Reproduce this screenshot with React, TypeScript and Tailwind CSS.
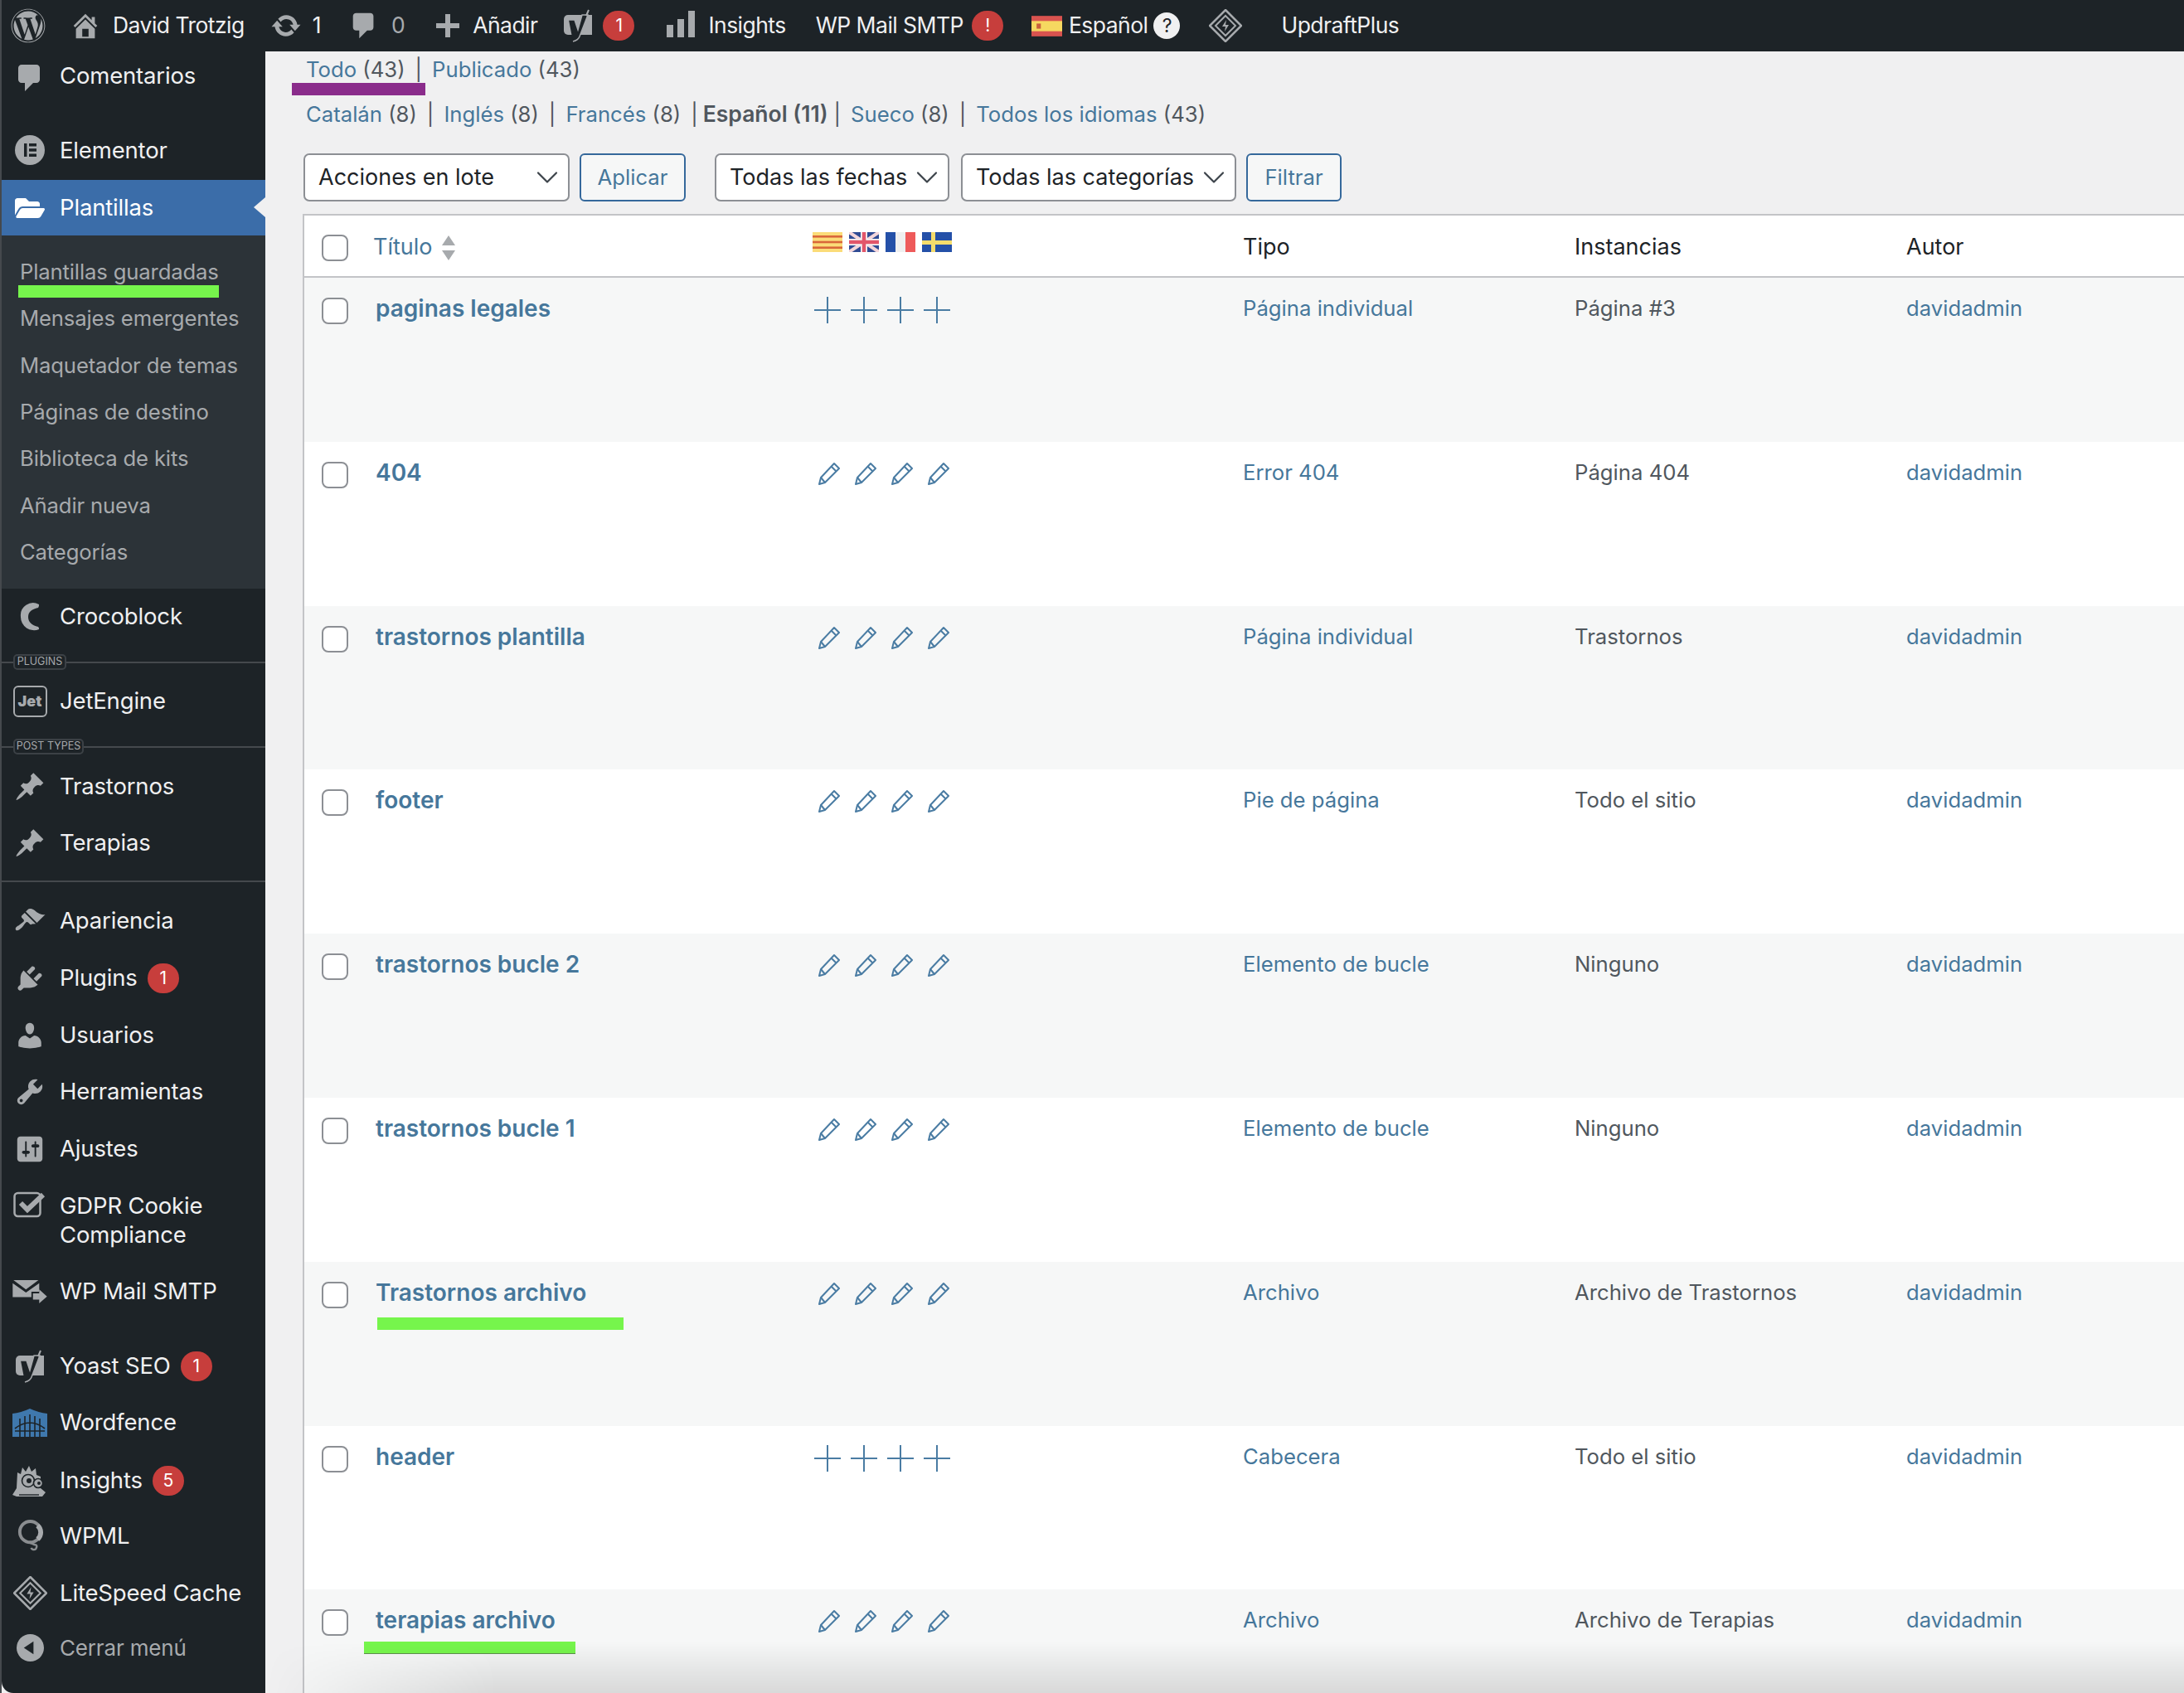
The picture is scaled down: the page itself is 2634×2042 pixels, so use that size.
import React from 'react';
import { ChevronDown } from 'lucide-react';
import { FaWordpress, FaFolderOpen } from 'react-icons/fa';

const LINK = 'text-[#46779b]';

// dashicons paths, 20x20 viewbox
const d = {
  home: 'M16 8.5l1.53 1.53-1.06 1.06L10 4.62l-6.47 6.47-1.06-1.06L10 2.5l4 4v-2h2v4zm-6-2.46l6 5.99V18H4v-5.97zM12 17v-5H8v5h4z',
  update: 'M10.2 3.28c3.53 0 6.43 2.61 6.92 6h2.08l-3.5 4-3.5-4h2.32c-.45-1.97-2.21-3.45-4.32-3.45-1.45 0-2.73.71-3.54 1.78L4.95 5.66C6.23 4.2 8.11 3.28 10.2 3.28zm-.4 13.44c-3.52 0-6.43-2.61-6.92-6H.8l3.5-4c1.17 1.33 2.33 2.67 3.5 4H5.48c.45 1.97 2.21 3.45 4.32 3.45 1.45 0 2.73-.71 3.54-1.78l1.71 1.95c-1.28 1.46-3.15 2.38-5.25 2.38z',
  comment: 'M5 2h9c1.1 0 2 .9 2 2v7c0 1.1-.9 2-2 2h-2l-5 5v-5H5c-1.1 0-2-.9-2-2V4c0-1.1.9-2 2-2z',
  pin: 'M10.44 3.02l1.82-1.82 6.36 6.35-1.83 1.82c-1.05-.68-2.48-.57-3.41.36l-.75.75c-.92.93-1.04 2.35-.35 3.41l-1.83 1.82-2.41-2.41-2.8 2.79c-.42.42-3.38 2.71-3.8 2.29s1.86-3.39 2.28-3.81l2.79-2.79L4.1 9.36l1.83-1.82c1.05.69 2.48.57 3.4-.36l.75-.75c.93-.92 1.05-2.35.36-3.41z',
  brush: 'M14.48 11.06L7.41 3.99l1.5-1.5c.5-.56 2.3-.47 3.51.32 1.21.8 1.43 1.28 2.91 2.1 1.18.64 2.45 1.26 4.45.85zm-.71.71L6.7 4.7 4.93 6.47c-.39.39-.39 1.02 0 1.41l1.06 1.06c.39.39.39 1.03 0 1.42-.6.6-1.43 1.11-2.21 1.69-.35.26-.7.53-1.01.84C1.43 13.23.4 14.84 1.19 15.63c.79.79 2.4-.24 3.76-1.59.31-.31.58-.66.85-1.01.57-.78 1.08-1.61 1.69-2.21.39-.39 1.02-.39 1.41 0l1.06 1.06c.39.39 1.02.39 1.41 0z',
  plug: 'M13.11 4.36L9.87 7.6 8 5.73l3.24-3.24c.35-.34 1.05-.2 1.56.32.52.51.66 1.21.31 1.55zm-8 1.77l.91-1.12 9.01 9.01-1.19.84c-.71.71-2.63 1.16-3.82 1.16H6.14L4.9 17.26c-.59.59-1.54.59-2.12 0-.59-.58-.59-1.53 0-2.12l1.24-1.24v-3.88c0-1.13.4-3.19 1.09-3.89zm7.26 3.97l3.24-3.24c.34-.35 1.04-.21 1.55.31.52.51.66 1.21.31 1.55l-3.24 3.25z',
  user: 'M10 9.25c-2.27 0-2.73-3.44-2.73-3.44C7 4.02 7.82 2 9.97 2c2.16 0 2.98 2.02 2.71 3.81 0 0-.41 3.44-2.68 3.44zm0 2.57L12.72 10c2.39 0 4.52 2.33 4.52 4.53v2.49s-3.65 1.13-7.24 1.13c-3.65 0-7.24-1.13-7.24-1.13v-2.49c0-2.25 1.94-4.48 4.47-4.48z',
  tools: 'M16.68 9.77c-1.34 1.34-3.3 1.67-4.95.99l-5.41 6.52c-.99.99-2.59.99-3.58 0s-.99-2.59 0-3.57l6.52-5.42c-.68-1.65-.35-3.61.99-4.95 1.28-1.28 3.12-1.62 4.72-1.06l-2.89 2.89 2.82 2.82 2.86-2.87c.53 1.58.18 3.39-1.08 4.65zM3.81 16.21c.4.39 1.04.39 1.43 0 .4-.4.4-1.04 0-1.43-.39-.4-1.03-.4-1.43 0-.39.39-.39 1.03 0 1.43z',
  settings: 'M18 16V4c0-1.1-.9-2-2-2H4c-1.1 0-2 .9-2 2v12c0 1.1.9 2 2 2h12c1.1 0 2-.9 2-2zM8 11h1c.55 0 1 .45 1 1s-.45 1-1 1H8v1.5c0 .28-.22.5-.5.5s-.5-.22-.5-.5V13H6c-.55 0-1-.45-1-1s.45-1 1-1h1V5.5c0-.28.22-.5.5-.5s.5.22.5.5V11zm5-2h-1c-.55 0-1-.45-1-1s.45-1 1-1h1V5.5c0-.28.22-.5.5-.5s.5.22.5.5V7h1c.55 0 1 .45 1 1s-.45 1-1 1h-1v5.5c0 .28-.22.5-.5.5s-.5-.22-.5-.5V9z',
};

function Dash({ path, className }: { path: string; className: string }) {
  return (
    <svg viewBox="0 0 20 20" className={className} fill="currentColor" fillRule="evenodd">
      <path d={path} />
    </svg>
  );
}

function YoastIcon({ className }: { className: string }) {
  return (
    <svg viewBox="0 0 36 40" className={className}>
      <path d="M6 7h29v24H6a5 5 0 0 1-5-5V12a5 5 0 0 1 5-5z" fill="#a7aaad" />
      <path d="M7 13h7l4 12 5-18h7L20 33c-1 3-4 5-8 6" fill="#1d2327" stroke="#a7aaad" strokeWidth="1.5" />
      <path d="M31 1l-3 7" stroke="#a7aaad" strokeWidth="2" />
    </svg>
  );
}

function LiteSpeedIcon({ className }: { className: string }) {
  return (
    <svg viewBox="0 0 40 40" className={className} fill="none" stroke="#a7aaad">
      <path d="M20 1l19 19-19 19L1 20z" strokeWidth="2.5" />
      <path d="M20 8l12 12-12 12L8 20z" strokeWidth="2" />
      <path d="M21 13l-5 8h4l-1 6 5-8h-4z" fill="#a7aaad" stroke="none" />
    </svg>
  );
}

function ElementorIcon() {
  return (
    <svg viewBox="0 0 36 36" className="w-[36px] h-[36px]">
      <circle cx="18" cy="18" r="18" fill="#a7aaad" />
      <rect x="11" y="10" width="3.5" height="16" fill="#1d2327" />
      <rect x="17" y="10" width="9" height="3.5" fill="#1d2327" />
      <rect x="17" y="16.2" width="9" height="3.5" fill="#1d2327" />
      <rect x="17" y="22.5" width="9" height="3.5" fill="#1d2327" />
    </svg>
  );
}

function CrocoIcon() {
  return (
    <svg viewBox="0 0 24 36" className="w-[24px] h-[36px]">
      <path d="M23 3A15 15 0 0 0 1 18 16 16 0 0 0 23 33c0-1 0-2-1-3-8-2-12-6-12-12S14 9 22 7c1-1 1-3 1-4z" fill="#a7aaad" />
    </svg>
  );
}

function JetIcon() {
  return (
    <div className="w-[41px] h-[38px] rounded-[6px] border-2 border-[#a7aaad] flex items-center justify-center text-[#a7aaad] text-[18px] font-black leading-none tracking-normal">
      Jet
    </div>
  );
}

function MailIcon() {
  return (
    <svg viewBox="0 0 44 34" className="w-[42px] h-[32px]" fill="#a7aaad">
      <path d="M1 2h32l-16 12z" />
      <path d="M0 6l17 12L34 6v11H24v7H0z" />
      <path d="M26 19h8v-5l10 9-10 9v-5h-8z" />
    </svg>
  );
}

function CheckBoxIcon() {
  return (
    <svg viewBox="0 0 40 32" className="w-[40px] h-[32px]" fill="none">
      <rect x="1.5" y="2" width="31" height="28" rx="4" stroke="#a7aaad" strokeWidth="2.5" />
      <path d="M9 14l8 8L36 4" stroke="#a7aaad" strokeWidth="6" />
    </svg>
  );
}

function WordfenceIcon() {
  return (
    <svg viewBox="0 0 42 34" className="w-[42px] h-[34px]">
      <path d="M0 6q10-1 21-6 11 5 21 6v28H0z" fill="#3f78ad" />
      <path d="M3 24q18-14 36 0M9 12v22M15 9v25M21 7v27M27 9v25M33 12v22M3 27h36" stroke="#1d2327" strokeWidth="1.6" fill="none" />
    </svg>
  );
}

function InsightsIcon() {
  return (
    <svg viewBox="0 0 42 40" className="w-[42px] h-[40px]">
      <path d="M6 10l4 2 2-8 4 5 4-7 3 7 5-4 1 8 5 2v14l6 5-4 5H5l-5-2 5-8z" fill="#a7aaad" />
      <circle cx="19" cy="20" r="7.5" fill="#a7aaad" stroke="#1d2327" strokeWidth="1.6" />
      <circle cx="20" cy="20" r="3" fill="#1d2327" />
      <circle cx="31" cy="23" r="5.5" fill="#a7aaad" stroke="#1d2327" strokeWidth="1.6" />
      <circle cx="32" cy="23" r="2" fill="#1d2327" />
      <path d="M8 37h24" stroke="#1d2327" strokeWidth="1.4" />
    </svg>
  );
}

function WpmlIcon() {
  return (
    <svg viewBox="0 0 34 40" className="w-[33px] h-[39px]" fill="none" stroke="#8a8d90">
      <circle cx="17" cy="15" r="13" strokeWidth="4" />
      <path d="M26 7a11 11 0 0 1 0 17" stroke="#a7aaad" strokeWidth="6" />
      <path d="M17 29c3 0 4 2 6 2 2 0 3 2 1 5-2 2-5 1-6-1" strokeWidth="2.5" />
    </svg>
  );
}

function CollapseIcon() {
  return (
    <svg viewBox="0 0 34 34" className="w-[33px] h-[33px]">
      <circle cx="17" cy="17" r="17" fill="#a7aaad" />
      <path d="M9 17l12-8v16z" fill="#1d2327" />
    </svg>
  );
}

function Badge({ n, className = '' }: { n: string; className?: string }) {
  return (
    <span className={`w-[38px] h-[36px] rounded-full bg-[#c73e3c] text-white text-[21px] flex items-center justify-center ${className}`}>
      {n}
    </span>
  );
}

function Separator({ label, badgeWidth, className }: { label: string; badgeWidth: string; className: string }) {
  return (
    <div className={`relative pt-[20px] ${className}`}>
      <div className="h-[2px] bg-[#45494d]" />
      <span className={`absolute left-[14px] top-[11px] h-[19px] ${badgeWidth} rounded-[5px] border-2 border-[#3c4146] bg-[#1d2327] text-[#a7aaad] text-[12.5px] tracking-normal leading-none flex items-center justify-center`}>
        {label}
      </span>
    </div>
  );
}

function IconSlot({ children, className = '' }: { children: React.ReactNode; className?: string }) {
  return <div className={`w-[70px] shrink-0 flex justify-center pl-[6px] pr-[8px] ${className}`}>{children}</div>;
}

function MenuItem({ icon, label, className = 'h-[68px]', badge, muted }: { icon: React.ReactNode; label: React.ReactNode; className?: string; badge?: string; muted?: boolean }) {
  return (
    <div className={`flex items-center ${className}`}>
      <IconSlot>{icon}</IconSlot>
      <span className={`leading-[35px] ${muted ? 'text-[#a7aaad] text-[26px]' : 'text-[#f0f0f1]'}`}>{label}</span>
      {badge && <Badge n={badge} className="ml-[12px]" />}
    </div>
  );
}

function Sidebar() {
  const gray = 'text-[#a7aaad]';
  const subItems = ['Plantillas guardadas', 'Mensajes emergentes', 'Maquetador de temas', 'Páginas de destino', 'Biblioteca de kits', 'Añadir nueva', 'Categorías'];
  return (
    <aside className="w-[318px] shrink-0 bg-[#1d2327] text-[27.5px] tracking-[-0.006em] rounded-bl-[14px]">
      <MenuItem className="h-[58px]" icon={<Dash path={d.comment} className={`w-[40px] h-[40px] mt-[6px] ${gray}`} />} label="Comentarios" />
      <MenuItem className="h-[68px] mt-[27px]" icon={<ElementorIcon />} label="Elementor" />
      <div className="relative mt-[2px] h-[67px] bg-[#3b6da9] flex items-center">
        <IconSlot><FaFolderOpen className="w-[36px] h-[32px] text-white" /></IconSlot>
        <span className="text-white">Plantillas</span>
        <span className="absolute right-0 top-[21px] w-0 h-0 border-y-[12px] border-y-transparent border-r-[14px] border-r-[#f0f0f1]" />
      </div>
      <div className="bg-[#2c3338] pt-[16px] pb-[15px]">
        {subItems.map((s) => (
          <div key={s} className="h-[56.4px] pl-[22px] flex items-center text-[25.7px] text-[#a7aaad]">
            {s}
          </div>
        ))}
      </div>
      <MenuItem icon={<CrocoIcon />} label="Crocoblock" />
      <Separator label="PLUGINS" badgeWidth="w-[64px]" className="h-[34px]" />
      <MenuItem icon={<JetIcon />} label="JetEngine" />
      <Separator label="POST TYPES" badgeWidth="w-[85px]" className="h-[35px]" />
      <MenuItem icon={<Dash path={d.pin} className={`w-[38px] h-[38px] ${gray}`} />} label="Trastornos" />
      <MenuItem icon={<Dash path={d.pin} className={`w-[38px] h-[38px] ${gray}`} />} label="Terapias" />
      <div className="h-[2px] bg-[#45494d] mt-[11px]" />
      <MenuItem className="h-[68px] mt-[13px]" icon={<Dash path={d.brush} className={`w-[38px] h-[38px] ${gray}`} />} label="Apariencia" />
      <MenuItem className="h-[68px] mt-px" icon={<Dash path={d.plug} className={`w-[38px] h-[38px] ${gray}`} />} label="Plugins" badge="1" />
      <MenuItem className="h-[68px] mt-px" icon={<Dash path={d.user} className={`w-[38px] h-[38px] ${gray}`} />} label="Usuarios" />
      <MenuItem icon={<Dash path={d.tools} className={`w-[38px] h-[38px] ${gray}`} />} label="Herramientas" />
      <MenuItem className="h-[68px] mt-px" icon={<Dash path={d.settings} className={`w-[38px] h-[38px] ${gray}`} />} label="Ajustes" />
      <div className="flex h-[104px] pt-[17px]">
        <IconSlot className="h-[32px]"><CheckBoxIcon /></IconSlot>
        <span className="leading-[35px] text-[#f0f0f1]">GDPR Cookie<br />Compliance</span>
      </div>
      <MenuItem icon={<MailIcon />} label="WP Mail SMTP" />
      <MenuItem className="h-[68px] mt-[22px]" icon={<YoastIcon className="w-[36px] h-[40px]" />} label="Yoast SEO" badge="1" />
      <MenuItem icon={<WordfenceIcon />} label="Wordfence" />
      <MenuItem className="h-[68px] mt-[2px]" icon={<InsightsIcon />} label="Insights" badge="5" />
      <MenuItem className="h-[68px] -mt-px" icon={<WpmlIcon />} label="WPML" />
      <MenuItem className="h-[68px] mt-px" icon={<LiteSpeedIcon className="w-[41px] h-[41px]" />} label="LiteSpeed Cache" />
      <MenuItem className="h-[64px]" icon={<CollapseIcon />} label="Cerrar menú" muted />
    </aside>
  );
}

function TopBar() {
  const gray = 'text-[#a7aaad]';
  return (
    <header className="h-[62px] shrink-0 bg-[#1d2327] flex items-center text-[26.5px] tracking-[-0.02em] text-[#f0f0f1]">
      <FaWordpress className={`ml-[11px] w-[42px] h-[42px] ${gray}`} />
      <Dash path={d.home} className={`ml-[29px] w-[38px] h-[38px] ${gray}`} />
      <span className="ml-[14px]">David Trotzig</span>
      <Dash path={d.update} className={`ml-[31px] w-[38px] h-[38px] ${gray}`} />
      <span className="ml-[13px]">1</span>
      <Dash path={d.comment} className={`ml-[33px] w-[38px] h-[38px] ${gray}`} />
      <span className={`ml-[14px] ${gray}`}>0</span>
      <span className="ml-[38px] relative w-[28px] h-[28px]">
        <span className="absolute left-[11px] top-0 w-[6px] h-[28px] bg-[#a7aaad]" />
        <span className="absolute left-0 top-[11px] w-[28px] h-[6px] bg-[#a7aaad]" />
      </span>
      <span className="ml-[16px]">Añadir</span>
      <YoastIcon className="ml-[31px] w-[36px] h-[42px]" />
      <Badge n="1" className="ml-[12px]" />
      <svg viewBox="0 0 36 36" className="ml-[39px] w-[36px] h-[36px]" fill="#a7aaad">
        <rect x="0" y="17" width="8" height="15" />
        <rect x="13" y="10" width="8" height="22" />
        <rect x="26" y="0" width="8" height="32" />
      </svg>
      <span className="ml-[14px]">Insights</span>
      <span className="ml-[36px]">WP Mail SMTP</span>
      <Badge n="!" className="ml-[10px]" />
      <svg viewBox="0 0 36 24" className="ml-[34px] w-[37px] h-[25px]">
        <rect width="36" height="24" fill="#d9534f" />
        <rect y="6" width="36" height="12" fill="#f6d860" />
        <rect x="6" y="9" width="5" height="6" fill="#c9603c" />
      </svg>
      <span className="ml-[8px]">Español</span>
      <span className="ml-[7px] w-[32px] h-[32px] rounded-full bg-[#f0f0f1] text-[#1d2327] text-[23px] flex items-center justify-center">?</span>
      <LiteSpeedIcon className="ml-[35px] w-[40px] h-[40px]" />
      <span className="ml-[47px]">UpdraftPlus</span>
    </header>
  );
}

function Count({ label, n, sep = true, strong }: { label: string; n: string; sep?: boolean; strong?: boolean }) {
  return (
    <>
      {strong ? <span className="font-semibold text-[26.5px] -ml-[6px]">{label} {n}</span> : (
        <span><span className={LINK}>{label}</span> {n}</span>
      )}
      {sep && <span className={strong ? 'ml-[7px] mr-[12px]' : 'mx-[12px]'}>|</span>}
    </>
  );
}

function FilterSelect({ label, className }: { label: string; className: string }) {
  return (
    <div className={`h-[58px] rounded-[7px] border-2 border-[#8c8f94] bg-white flex items-center justify-between pl-[16px] pr-[3px] text-[#1d2327] text-[27px] ${className}`}>
      {label}
      <ChevronDown className="w-[44px] h-[44px] shrink-0 text-[#3c434a]" strokeWidth={1.2} />
    </div>
  );
}

function OutlineButton({ label, className }: { label: string; className: string }) {
  return (
    <div className={`h-[58px] rounded-[6px] border-2 border-[#35689b] bg-[#f6f7f7] flex items-center justify-center ${LINK} ${className}`}>
      {label}
    </div>
  );
}

function CheckBox() {
  return <div className="w-[32px] h-[32px] rounded-[8px] border-2 border-[#8c8f94] bg-white" />;
}

function Flags() {
  return (
    <div className="flex gap-[8px]">
      <svg viewBox="0 0 36 24" className="w-[36px] h-[24px]">
        <rect width="36" height="24" fill="#fbdc78" />
        <rect y="4" width="36" height="2.6" fill="#d9673a" />
        <rect y="10.7" width="36" height="2.6" fill="#d9673a" />
        <rect y="17.4" width="36" height="2.6" fill="#d9673a" />
      </svg>
      <svg viewBox="0 0 36 24" className="w-[36px] h-[24px]">
        <rect width="36" height="24" fill="#2f4b93" />
        <path d="M0 0l36 24M36 0L0 24" stroke="#f4d6da" strokeWidth="4" />
        <path d="M18 0v24M0 12h36" stroke="#f4f4f4" strokeWidth="8" />
        <path d="M18 0v24M0 12h36" stroke="#e2566a" strokeWidth="4.5" />
      </svg>
      <svg viewBox="0 0 36 24" className="w-[36px] h-[24px]">
        <rect width="12" height="24" fill="#2450a8" />
        <rect x="12" width="12" height="24" fill="#efefef" />
        <rect x="24" width="12" height="24" fill="#ee5a5a" />
      </svg>
      <svg viewBox="0 0 36 24" className="w-[36px] h-[24px]">
        <rect width="36" height="24" fill="#2450a8" />
        <rect x="11" width="5" height="24" fill="#f4dc6c" />
        <rect y="10" width="36" height="5" fill="#f4dc6c" />
      </svg>
    </div>
  );
}

function PlusIcon() {
  return (
    <svg viewBox="0 0 32 32" className="w-[32px] h-[32px]" stroke="#4a7ca3" strokeWidth="2">
      <path d="M16 0v32M0 16h32" />
    </svg>
  );
}

function PencilIcon() {
  return (
    <svg viewBox="0 0 28 28" className="w-[28px] h-[28px]" fill="none" stroke="#4a7ca3" strokeWidth="2" strokeLinejoin="round">
      <path d="M20 2l6 6L9 25l-7 2 2-8z" />
      <path d="M16.5 5.5l6 6M4 19l5 6" />
    </svg>
  );
}

const rows = [
  { title: 'paginas legales', plus: true, tipo: 'Página individual', inst: 'Página #3' },
  { title: '404', tipo: 'Error 404', inst: 'Página 404' },
  { title: 'trastornos plantilla', tipo: 'Página individual', inst: 'Trastornos' },
  { title: 'footer', tipo: 'Pie de página', inst: 'Todo el sitio' },
  { title: 'trastornos bucle 2', tipo: 'Elemento de bucle', inst: 'Ninguno' },
  { title: 'trastornos bucle 1', tipo: 'Elemento de bucle', inst: 'Ninguno' },
  { title: 'Trastornos archivo', tipo: 'Archivo', inst: 'Archivo de Trastornos' },
  { title: 'header', plus: true, tipo: 'Cabecera', inst: 'Todo el sitio' },
  { title: 'terapias archivo', tipo: 'Archivo', inst: 'Archivo de Terapias' },
];

const gridCols = 'grid grid-cols-[83px_530px_519px_400px_400px_1fr]';

function PostsTable() {
  return (
    <div className="ml-[45px] mt-[15px] border-l-2 border-[#c3c4c7]">
      <div className={`${gridCols} h-[77px] pt-[4px] bg-white border-y-2 border-[#c3c4c7] items-center text-[#1d2327] text-[27px]`}>
        <div className="pl-[21px]"><CheckBox /></div>
        <div className="flex items-center">
          <span className={LINK}>Título</span>
          <svg viewBox="0 0 18 30" className="ml-[10px] w-[18px] h-[30px]" fill="#a7aaad">
            <path d="M9 0l8 12H1zM9 30L1 18h16z" />
          </svg>
        </div>
        <div className="self-start pt-[16px]"><Flags /></div>
        <div>Tipo</div>
        <div>Instancias</div>
        <div>Autor</div>
      </div>
      {rows.map((r, i) => (
        <div key={r.title} className={`${gridCols} h-[197.8px] ${i % 2 === 0 ? 'bg-[#f6f7f7]' : 'bg-white'}`}>
          <div className="pl-[21px] pt-[24px]"><CheckBox /></div>
          <div className={`pl-[3px] pt-[19px] text-[28px] leading-[36px] font-semibold ${LINK}`}>{r.title}</div>
          <div className="pt-[23px] flex gap-[12px] pl-[2px]">
            {r.plus ? [0, 1, 2, 3].map((k) => <PlusIcon key={k} />) : (
              <div className="flex gap-[16px] pl-[4px] pt-[1px]">
                {[0, 1, 2, 3].map((k) => <PencilIcon key={k} />)}
              </div>
            )}
          </div>
          <div className={`pt-[19px] leading-[36px] ${LINK}`}>{r.tipo}</div>
          <div className="pt-[19px] leading-[36px]">{r.inst}</div>
          <div className={`pt-[19px] leading-[36px] ${LINK}`}>davidadmin</div>
        </div>
      ))}
    </div>
  );
}

export default function App() {
  return (
    <div className="relative h-[2042px] w-[2634px] overflow-hidden bg-[#f0f0f1] border-l-2 border-[#45494d] flex flex-col text-[25.7px] text-[#50575e] font-['Inter',sans-serif]">
      <TopBar />
      <div className="flex flex-1 min-h-0">
        <Sidebar />
        <main className="flex-1 min-w-0">
          <div className="pl-[49px] h-[44px] flex items-center">
            <Count label="Todo" n="(43)" />
            <Count label="Publicado" n="(43)" sep={false} />
          </div>
          <div className="pl-[49px] h-[52px] mt-[6px] flex items-center">
            <Count label="Catalán" n="(8)" />
            <Count label="Inglés" n="(8)" />
            <Count label="Francés" n="(8)" />
            <Count label="Español" n="(11)" strong />
            <Count label="Sueco" n="(8)" />
            <Count label="Todos los idiomas" n="(43)" sep={false} />
          </div>
          <div className="ml-[46px] mt-[21px] flex">
            <FilterSelect label="Acciones en lote" className="w-[321px]" />
            <OutlineButton label="Aplicar" className="ml-[12px] w-[128px]" />
            <FilterSelect label="Todas las fechas" className="ml-[35px] w-[283px]" />
            <FilterSelect label="Todas las categorías" className="ml-[14px] w-[332px]" />
            <OutlineButton label="Filtrar" className="ml-[12px] w-[115px]" />
          </div>
          <PostsTable />
        </main>
      </div>

      {/* hand drawn marks on top of the capture */}
      <div className="absolute left-[350px] top-[100px] w-[161px] h-[15px] bg-[#8a2c8b]" />
      <div className="absolute left-[20px] top-[344px] w-[242px] h-[15px] bg-[#76f54c]" />
      <div className="absolute left-[453px] top-[1589px] w-[297px] h-[15px] bg-[#76f54c]" />
      <div className="absolute left-[437px] top-[1980px] w-[255px] h-[15px] bg-[#76f54c] border-b border-[#5f8f4f]" />

      {/* window shadow along the bottom */}
      <div className="absolute left-[318px] right-0 bottom-0 h-[62px] bg-gradient-to-t from-black/12 to-transparent [mask-image:linear-gradient(to_right,transparent,black_280px)]" />
    </div>
  );
}
